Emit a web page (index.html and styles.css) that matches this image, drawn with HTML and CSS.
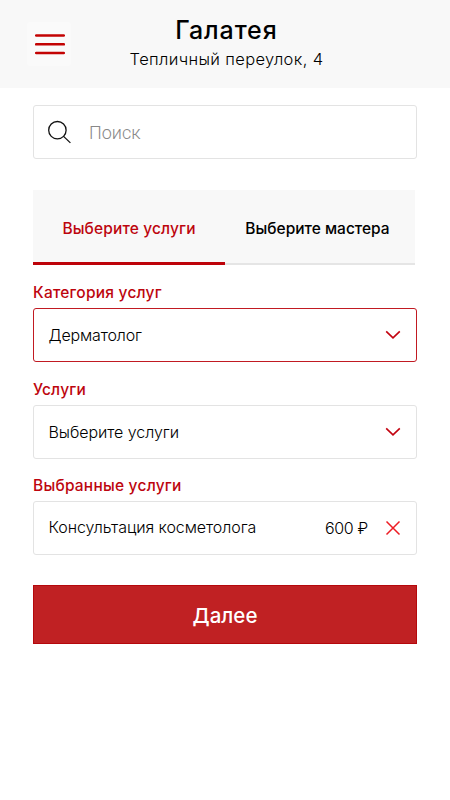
FILE: index.html
```html
<!DOCTYPE html>
<html lang="ru">
<head>
<meta charset="utf-8">
<meta name="viewport" content="width=device-width, initial-scale=1">
<title>Галатея</title>
<link rel="stylesheet" href="styles.css">
</head>
<body>
<header class="header">
  <button class="menu" type="button">
    <svg width="30" height="22" viewBox="0 0 30 22"><path d="M1.2 2.5h27.6M1.2 11.3h27.6M1.2 20h27.6" stroke="#c30303" stroke-width="2.6" stroke-linecap="round"/></svg>
  </button>
  <div class="place">
    <h1 class="title">Галатея</h1>
    <p class="address">Тепличный переулок, 4</p>
  </div>
</header>
<main class="content">
  <label class="box search">
    <svg width="26" height="26" viewBox="0 0 26 26" fill="none" stroke="#111" stroke-width="1.3"><circle cx="10.4" cy="11.2" r="8.7"/><path d="M16.6 17.4l6.8 6.5"/></svg>
    <input class="search-input" type="text" placeholder="Поиск">
  </label>
  <nav class="tabs">
    <a class="tab tab-active"><span>Выберите услуги</span></a>
    <a class="tab tab-master"><span>Выберите мастера</span></a>
  </nav>
  <section class="field">
    <h2 class="label">Категория услуг</h2>
    <div class="box select select-active">
      <span class="value derm">Дерматолог</span>
      <svg class="chevron" width="16" height="10" viewBox="0 0 16 10"><path d="M1.2 1.4L8 7.9l6.8-6.5" fill="none" stroke="#c30310" stroke-width="1.6"/></svg>
    </div>
  </section>
  <section class="field">
    <h2 class="label">Услуги</h2>
    <div class="box select">
      <span class="value">Выберите услуги</span>
      <svg class="chevron" width="16" height="10" viewBox="0 0 16 10"><path d="M1.2 1.4L8 7.9l6.8-6.5" fill="none" stroke="#c30310" stroke-width="1.6"/></svg>
    </div>
  </section>
  <section class="field">
    <h2 class="label">Выбранные услуги</h2>
    <div class="box select select-chosen">
      <span class="value chosen">Консультация косметолога</span>
      <span class="price">600 ₽</span>
      <svg class="remove" width="16" height="16" viewBox="0 0 16 16"><path d="M1.5 1.5l13 13M14.5 1.5l-13 13" fill="none" stroke="#ed1c24" stroke-width="1.5"/></svg>
    </div>
  </section>
  <button class="next" type="button">Далее</button>
</main>
</body>
</html>
```

FILE: styles.css
```css
* { box-sizing: border-box; }
body { margin: 0; background: #fff; color: #000; font-family: Inter, "Liberation Sans", sans-serif; }
h1, h2, p { margin: 0; }
button { border: 0; padding: 0; font-family: inherit; }
svg { display: block; flex: none; }

.header { display: grid; grid-template-columns: 44px 1fr 44px; align-items: center; height: 88px; padding: 0 27px; background: #f8f8f8; }
.menu { display: grid; place-items: center; width: 44px; height: 44px; padding-left: 1px; border-radius: 4px; background: #fafafa; }
.place { display: flex; flex-direction: column; align-items: center; padding-left: 3px; white-space: nowrap; }
.title { font-size: 25px; line-height: 30px; font-weight: 500; letter-spacing: 0.9px; }
.address { font-size: 16.5px; line-height: 28px; font-weight: 350; letter-spacing: 0.35px; }

.content { padding: 17px 33px 0; }
.box { display: flex; align-items: center; width: 384px; height: 54px; border: 1px solid #e3e3e3; border-radius: 3px; background: #fff; }
.search { padding-left: 13px; }
.search-input { margin: 2px 0 0 16px; padding: 0; border: 0; outline: 0; width: 250px; font: 300 18px/24px Roboto, sans-serif; background: none; }
.search-input::placeholder { color: #888; opacity: 1; }

.tabs { display: grid; grid-template-columns: 192px 190px; width: 382px; height: 75px; margin-top: 31px; background: #f8f8f8; }
.tab { display: flex; align-items: center; justify-content: center; border-bottom: 2px solid #e5e5e5; font-size: 15.5px; font-weight: 500; white-space: nowrap; padding-top: 3px; }
.tab-active { padding-top: 4px; color: #bd050e; border-bottom: 3px solid #bd0209; letter-spacing: 0.13px; }
.tab-master { padding-right: 5px; }

.field { height: 97px; }
.tabs + .field { margin-top: 18px; }
.field + .field + .field { margin-top: -1px; }
.label { height: 25px; font-size: 15.5px; line-height: 20px; font-weight: 500; letter-spacing: 0.22px; color: #bd050e; white-space: nowrap; }
.select { padding: 0 15px; }
.select-active { border-color: #c11a22; }
.value, .price { font-size: 16px; font-weight: 350; letter-spacing: -0.06px; white-space: nowrap; }
.value { margin-left: -0.5px; }
.derm { letter-spacing: -0.15px; }
.chosen { margin-top: -2px; }
.chevron, .remove { margin-left: auto; }
.price { margin-left: auto; letter-spacing: -0.3px; }
.price + .remove { margin-left: 17px; }
.next { display: block; width: 384px; height: 59px; margin-top: 12px; padding-top: 2px; border: 1px solid #b5080c; background: #c02123; color: #fff; font-size: 20.5px; font-weight: 500; }
```
